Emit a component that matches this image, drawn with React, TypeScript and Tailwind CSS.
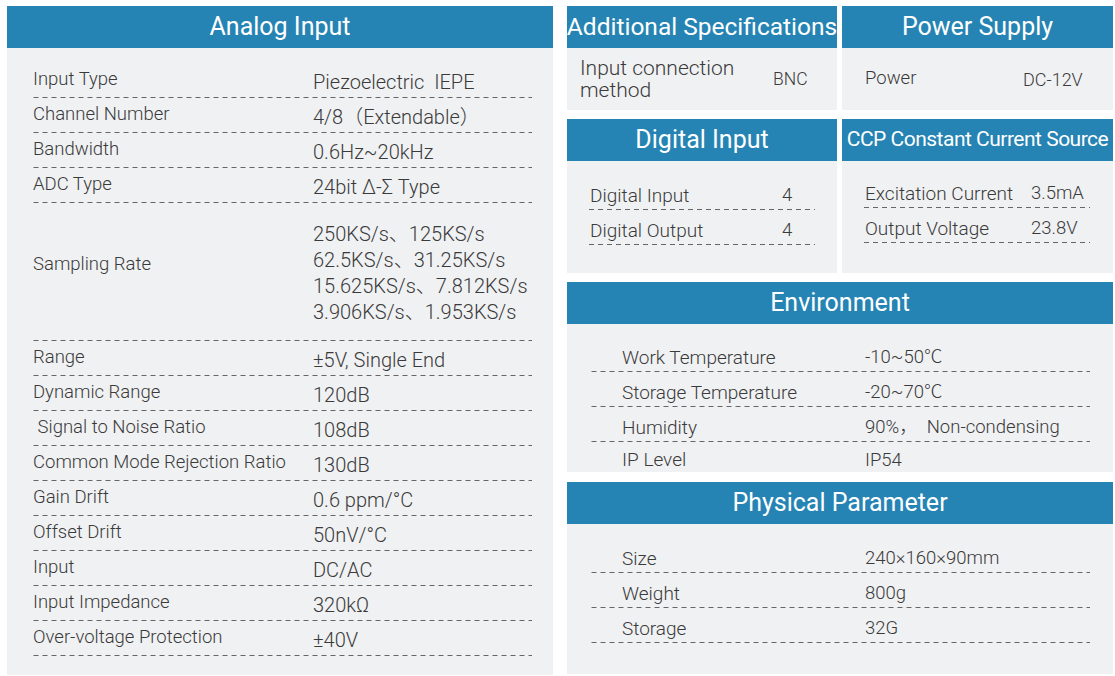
const font = "font-['Roboto','Noto_Sans_CJK_SC',sans-serif] font-light";

const leftRows: [string, string[] | string, number?][] = [
  ["Input Type", "Piezoelectric  IEPE"],
  ["Channel Number", "4/8（Extendable）"],
  ["Bandwidth", "0.6Hz~20kHz"],
  ["ADC Type", "24bit Δ-Σ Type"],
  [
    "Sampling Rate",
    ["250KS/s、125KS/s", "62.5KS/s、31.25KS/s", "15.625KS/s、7.812KS/s", "3.906KS/s、1.953KS/s"],
    138,
  ],
  ["Range", "±5V, Single End"],
  ["Dynamic Range", "120dB"],
  [" Signal to Noise Ratio", "108dB"],
  ["Common Mode Rejection Ratio", "130dB"],
  ["Gain Drift", "0.6 ppm/°C"],
  ["Offset Drift", "50nV/°C"],
  ["Input", "DC/AC"],
  ["Input Impedance", "320kΩ"],
  ["Over-voltage Protection", "±40V"],
];

function Header({ title, size = "text-[25px]" }: { title: string; size?: string }) {
  return (
    <div
      className={
        "h-[42px] bg-[#2584b3] text-white font-normal flex items-center justify-center whitespace-nowrap " + size
      }
    >
      {title}
    </div>
  );
}

function Row({
  label,
  value,
  labelW,
  last,
}: {
  label: string;
  value: string;
  labelW: string;
  last?: boolean;
}) {
  return (
    <div
      className={
        "flex items-center pt-[7px] " +
        (last
          ? "h-[30px]"
          : "h-[35px] bg-[linear-gradient(to_right,#666_5px,transparent_5px)] bg-[length:9px_1px] bg-bottom bg-repeat-x")
      }
    >
      <div className={labelW + " whitespace-pre text-[19px]"}>{label}</div>
      <div className="whitespace-pre text-[18.5px]">{value}</div>
    </div>
  );
}

export default function App() {
  return (
    <div className={"bg-white w-[1115px] h-[676px] overflow-hidden pt-[6px] text-[#3a3a3a] flex " + font}>
      {/* Analog Input */}
      <div className="ml-[7px] w-[546px] flex flex-col">
        <Header title="Analog Input" />
        <div className="bg-[#f0f1f3] h-[627px] pt-[15px] pl-[23px] pr-[21px]">
          {leftRows.map(([label, value, h]) => (
            <div
              key={label}
              className="flex items-center bg-[linear-gradient(to_right,#666_5px,transparent_5px)] bg-[length:9px_1px] bg-bottom bg-repeat-x"
              style={{ height: h ?? 35 }}
            >
              <div
                className={
                  "w-[283px] pl-[3px] whitespace-pre text-[18.5px] " + (h ? "pb-[14px]" : "pb-[2px]")
                }
              >
                {label}
              </div>
              <div className="whitespace-pre text-[20px] leading-[26px] pt-[2px]">
                {Array.isArray(value) ? value.map((v) => <div key={v}>{v}</div>) : value}
              </div>
            </div>
          ))}
        </div>
      </div>

      {/* Right column */}
      <div className="ml-[14px] w-[546px] flex flex-col">
        <div className="flex gap-[5px]">
          <div className="w-[270px]">
            <Header title="Additional Specifications" size="text-[24.5px]" />
            <div className="bg-[#f0f1f3] h-[62px] pl-[13px] flex items-center">
              <div className="w-[193px] text-[21px] leading-[22px] pr-[20px]">Input connection method</div>
              <div className="text-[17.5px]">BNC</div>
            </div>
          </div>
          <div className="w-[271px]">
            <Header title="Power Supply" />
            <div className="bg-[#f0f1f3] h-[62px] pl-[23px] flex items-center">
              <div className="w-[158px] text-[18.5px]">Power</div>
              <div className="text-[18px]">DC-12V</div>
            </div>
          </div>
        </div>

        <div className="flex gap-[5px] mt-[9px]">
          <div className="w-[270px]">
            <Header title="Digital Input" />
            <div className="bg-[#f0f1f3] h-[112px] pt-[14px] pl-[21px] pr-[22px]">
              <Row label="Digital Input" value="4" labelW="w-[194px] pl-[2px]" />
              <Row label="Digital Output" value="4" labelW="w-[194px] pl-[2px]" />
            </div>
          </div>
          <div className="w-[271px]">
            <Header title="CCP  Constant Current Source" size="text-[21px] tracking-[-0.5px]" />
            <div className="bg-[#f0f1f3] h-[112px] pt-[14px] pl-[21px] pr-[23px]">
              <div className="-translate-y-[2px]">
                <Row label="Excitation Current" value="3.5mA" labelW="w-[168px] pl-[2px]" />
                <Row label="Output Voltage" value="23.8V" labelW="w-[168px] pl-[2px]" />
              </div>
            </div>
          </div>
        </div>

        <div className="mt-[9px]">
          <Header title="Environment" />
          <div className="bg-[#f0f1f3] h-[148px] pt-[13px] pl-[21px] pr-[23px]">
            <Row label="Work Temperature" value="-10~50℃" labelW="w-[277px] pl-[34px]" />
            <Row label="Storage Temperature" value="-20~70℃" labelW="w-[277px] pl-[34px]" />
            <Row label="Humidity" value="90%，  Non-condensing" labelW="w-[277px] pl-[34px]" />
            <Row label="IP Level" value="IP54" labelW="w-[277px] pl-[34px]" last />
          </div>
        </div>

        <div className="mt-[10px]">
          <Header title="Physical Parameter" />
          <div className="bg-[#f0f1f3] h-[150px] pt-[14px] pl-[21px] pr-[23px]">
            <Row label="Size" value="240×160×90mm" labelW="w-[277px] pl-[34px]" />
            <Row label="Weight" value="800g" labelW="w-[277px] pl-[34px]" />
            <Row label="Storage" value="32G" labelW="w-[277px] pl-[34px]" />
          </div>
        </div>
      </div>
    </div>
  );
}
